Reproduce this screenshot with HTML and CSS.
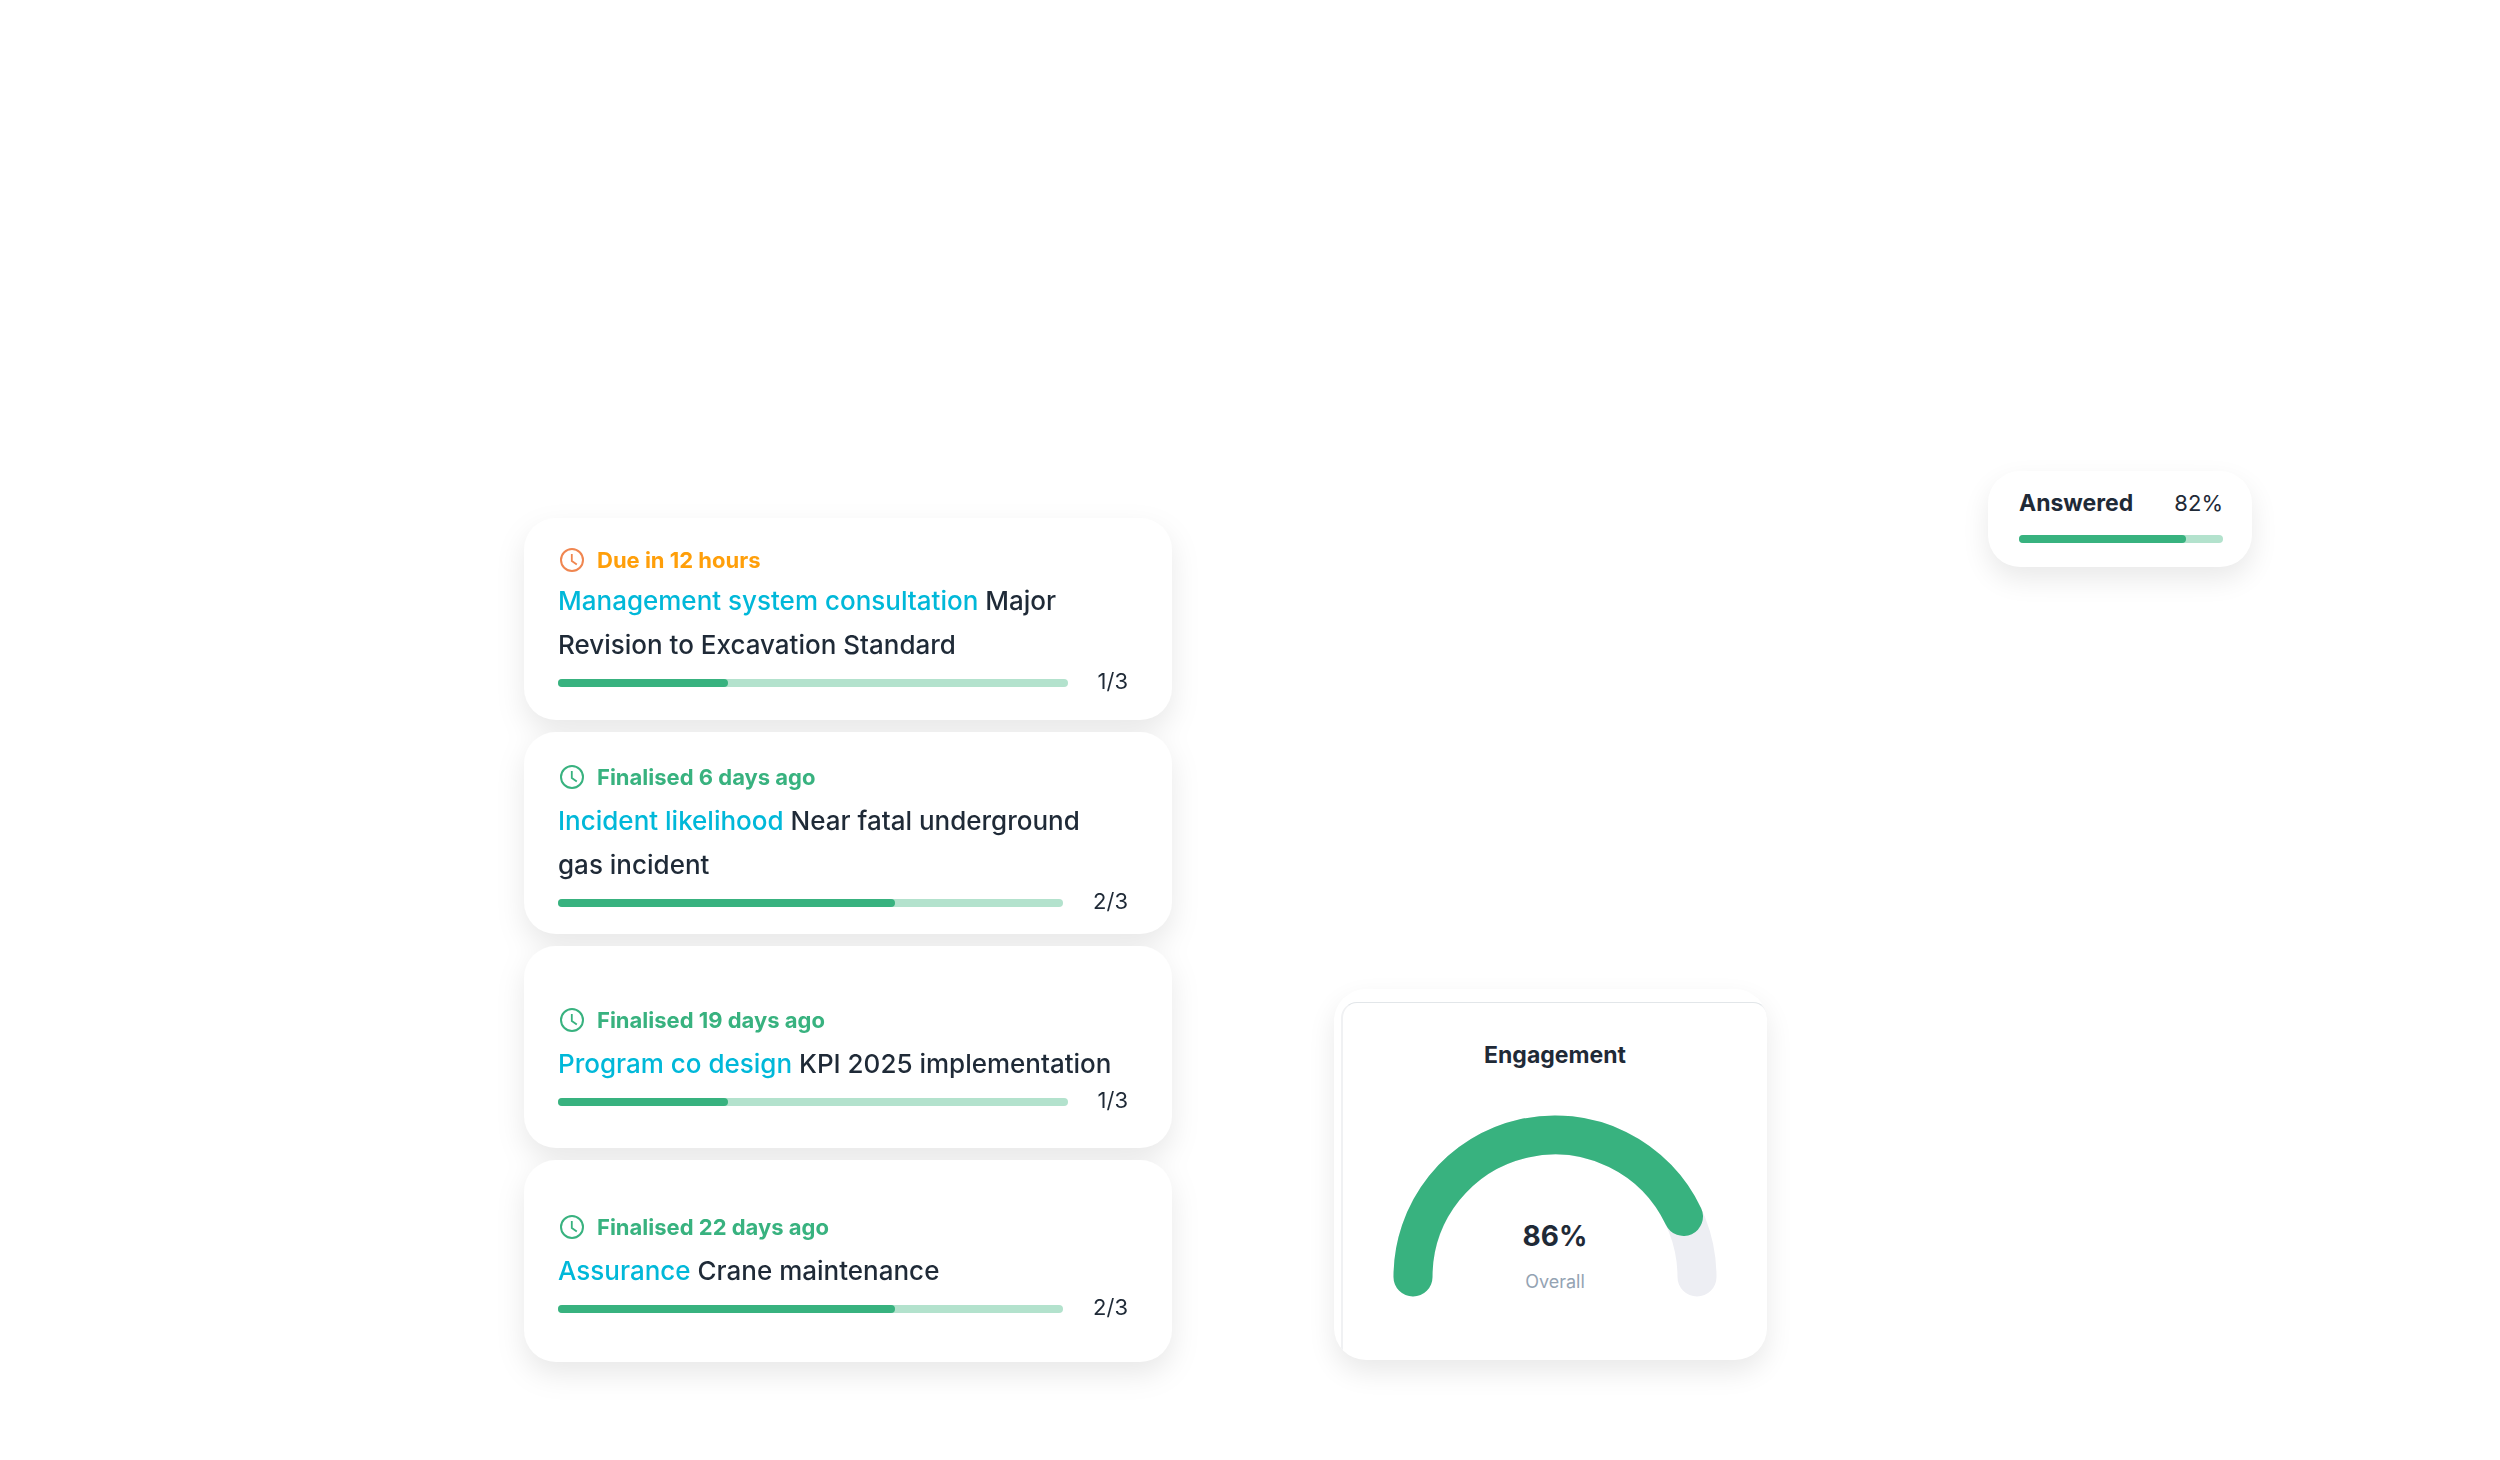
FILE: index.html
```html
<!DOCTYPE html>
<html lang="en">
<head>
  <meta charset="UTF-8">
  <meta name="viewport" content="width=device-width, initial-scale=1.0">
  <title>Engagement Overview</title>
  <link rel="stylesheet" href="styles.css">
</head>
<body>
  <!-- Shared clock icon -->
  <svg class="sprite" aria-hidden="true">
    <symbol id="clock" viewBox="0 0 26 26">
      <circle cx="13" cy="13" r="11" fill="none" stroke="currentColor" stroke-width="2"/>
      <path d="M12.800 7v7l5 3.500" fill="none" stroke="currentColor" stroke-width="1.800"/>
    </symbol>
  </svg>

  <main class="dashboard">
    <!-- Task cards -->
    <section class="tasks">
      <article class="card task task-due">
        <p class="status"><svg class="icon"><use href="#clock"/></svg>Due in 12 hours</p>
        <h2><a href="#">Management system consultation</a> Major Revision to Excavation Standard</h2>
        <div class="progress-row">
          <div class="bar"><div class="fill" style="width: 33.3%"></div></div>
          <span class="count">1/3</span>
        </div>
      </article>

      <article class="card task task-long">
        <p class="status"><svg class="icon"><use href="#clock"/></svg>Finalised 6 days ago</p>
        <h2><a href="#">Incident likelihood</a> Near fatal underground gas incident</h2>
        <div class="progress-row">
          <div class="bar"><div class="fill" style="width: 66.7%"></div></div>
          <span class="count">2/3</span>
        </div>
      </article>

      <article class="card task task-short">
        <p class="status"><svg class="icon"><use href="#clock"/></svg>Finalised 19 days ago</p>
        <h2><a href="#">Program co design</a> KPI 2025 implementation</h2>
        <div class="progress-row">
          <div class="bar"><div class="fill" style="width: 33.3%"></div></div>
          <span class="count">1/3</span>
        </div>
      </article>

      <article class="card task task-last">
        <p class="status"><svg class="icon"><use href="#clock"/></svg>Finalised 22 days ago</p>
        <h2><a href="#">Assurance</a> Crane maintenance</h2>
        <div class="progress-row">
          <div class="bar"><div class="fill" style="width: 66.7%"></div></div>
          <span class="count">2/3</span>
        </div>
      </article>
    </section>

    <!-- Engagement gauge -->
    <section class="card engagement">
      <div class="panel">
        <h3>Engagement</h3>
        <div class="gauge">
          <svg viewBox="0 0 324 182">
            <path d="M20 162a142 142 0 0 1 284 0" fill="none" stroke="#edeef3" stroke-width="39" stroke-linecap="round"/>
            <path d="M20 162A142 142 0 0 1 290.500 101.500" fill="none" stroke="#38b27f" stroke-width="39" stroke-linecap="round"/>
          </svg>
          <div class="gauge-label">
            <strong>86%</strong>
            <span>Overall</span>
          </div>
        </div>
      </div>
    </section>

    <!-- Answered -->
    <section class="card answered">
      <div class="answered-head">
        <strong>Answered</strong>
        <span>82%</span>
      </div>
      <div class="bar"><div class="fill" style="width: 82%"></div></div>
    </section>
  </main>
</body>
</html>
```
FILE: styles.css
```css
* {
  box-sizing: border-box;
}

body {
  margin: 0;
  background-color: #fff;
  color: #1f2a37;
  font-family: Inter, "Liberation Sans", sans-serif;
}

h2, h3, p {
  margin: 0;
}

.sprite {
  display: none;
}

/* Cards sit in columns 2, 4 and 6, the rest is empty space */
.dashboard {
  display: grid;
  grid-template-columns: 524fr 648fr 162fr 433fr 221fr 264fr 248fr;
  padding: 471px 0 98px;
}

.card {
  background-color: #fff;
  border-radius: 32px;
}

/* One shadow for the whole stack, so it never falls on a neighbour */
.tasks {
  grid-column: 2;
  display: flex;
  flex-direction: column;
  gap: 12px;
  margin-top: 47px;
  filter: drop-shadow(0 12px 14px rgba(0, 0, 0, 0.09));
}

.task {
  min-height: 202px;
  padding: 28px 44px 0 34px;
}

.task-long {
  padding-top: 31px;
}

.task-short {
  padding-top: 60px;
}

.task-last {
  padding-top: 53px;
}

.status {
  display: flex;
  align-items: center;
  gap: 12px;
  margin-bottom: 8px;
  padding-left: 1px;
  color: #38b27f;
  font-size: 22px;
  font-weight: 700;
  line-height: 28px;
}

.icon {
  width: 26px;
  height: 26px;
}

.task-due .status {
  margin-bottom: 5px;
  color: #ff9f0a;
}

.task-due .icon {
  color: #f08650;
}

.task h2 {
  padding-right: 8px;
  font-size: 26px;
  font-weight: 500;
  line-height: 44px;
}

.task h2 a {
  color: #00b8d9;
  text-decoration: none;
}

.progress-row {
  display: flex;
  align-items: center;
  gap: 30px;
}

.bar {
  flex: 1;
  height: 8px;
  border-radius: 4px;
  background-color: #b3e2cd;
}

.fill {
  height: 100%;
  border-radius: 4px;
  background-color: #38b27f;
}

.count {
  padding-bottom: 4px;
  font-size: 22px;
  line-height: 28px;
}

/* Engagement card */
.engagement {
  grid-column: 4;
  align-self: end;
  height: 371px;
  margin-bottom: 2px;
  padding: 13px 0 0 7px;
  overflow: hidden;
  box-shadow: 0 12px 28px rgba(0, 0, 0, 0.09);
}

/* The panel runs past the right and bottom edges of the card */
.panel {
  height: 372px;
  margin-right: -2px;
  padding-top: 36px;
  border: 2px solid #f0f1f3;
  border-top: 1px solid #e2e6e9;
  border-radius: 16px;
  text-align: center;
}

.panel h3 {
  font-size: 23px;
  line-height: 32px;
}

.gauge {
  position: relative;
  width: 324px;
  margin: 44px auto 0;
}

.gauge svg {
  display: block;
}

.gauge-label {
  position: absolute;
  inset: auto 0 4px;
}

.gauge-label strong {
  display: block;
  margin-bottom: 17px;
  font-size: 28px;
  line-height: 36px;
}

.gauge-label span {
  display: block;
  color: #94a3b3;
  font-size: 18px;
  line-height: 22px;
}

/* Answered card */
.answered {
  grid-column: 6;
  align-self: start;
  padding: 16px 29px 24px 31px;
  box-shadow: 0 12px 28px rgba(0, 0, 0, 0.09);
}

.answered-head {
  display: flex;
  justify-content: space-between;
  margin-bottom: 16px;
  font-size: 23px;
  line-height: 32px;
}

.answered-head span {
  font-size: 22px;
}
```
